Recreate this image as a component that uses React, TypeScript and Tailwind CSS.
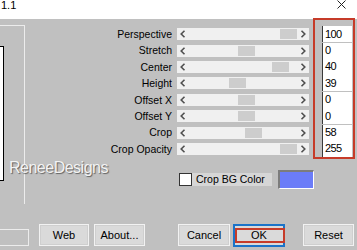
const rows = [
  { label: 'Perspective', value: '100', thumb: 103 },
  { label: 'Stretch', value: '0', thumb: 61 },
  { label: 'Center', value: '40', thumb: 95 },
  { label: 'Height', value: '39', thumb: 52 },
  { label: 'Offset X', value: '0', thumb: 61 },
  { label: 'Offset Y', value: '0', thumb: 61 },
  { label: 'Crop', value: '58', thumb: 68 },
  { label: 'Crop Opacity', value: '255', thumb: 103 },
];

function Chevron({ dir }: { dir: 'left' | 'right' }) {
  return (
    <svg width="6" height="8" viewBox="0 0 6 8" className="relative z-10">
      <path
        d={dir === 'left' ? 'M4.5 0.8 L1.2 4 L4.5 7.2' : 'M1.5 0.8 L4.8 4 L1.5 7.2'}
        fill="none"
        stroke="#505050"
        strokeWidth="1.6"
      />
    </svg>
  );
}

function ScrollBar({ thumb }: { thumb: number }) {
  return (
    <div className="relative ml-[5px] flex h-[12px] w-[132px] items-center justify-between bg-[#f0f0f0] px-[3px]">
      <Chevron dir="left" />
      {/* thumb sits over the track */}
      <div className="absolute top-[1px] h-[10px] w-[17px] bg-[#cdcdcd]" style={{ left: thumb }} />
      <Chevron dir="right" />
    </div>
  );
}

function Button({ label, className = '' }: { label: string; className?: string }) {
  return (
    <div
      className={`flex h-[22px] items-center justify-center border border-[#f2f2f2] bg-[#dadada] text-[11px] text-black shadow-[inset_0_0_0_1px_#cfcfcf] ${className}`}
    >
      {label}
    </div>
  );
}

export default function App() {
  return (
    <div className="relative h-[250px] w-[357px] overflow-hidden bg-[#c0c0c0] font-['Liberation_Sans',Arial,sans-serif] text-black">
      {/* title bar */}
      <div className="flex h-[19px] items-start justify-between bg-white pr-[11px]">
        <span className="ml-[1px] text-[11px] leading-[10px]">1.1</span>
        <svg width="9" height="9" viewBox="0 0 9 9">
          <path d="M0.5 0.5 L8.5 8.5 M8.5 0.5 L0.5 8.5" stroke="#222" strokeWidth="1" />
        </svg>
      </div>

      <div className="flex h-[205px]">
        {/* preview group */}
        <div className="mt-[6px] h-[179px] w-[25px] shrink-0 border-t border-r border-[#ececec]">
          <div className="-ml-[11px] mt-[20px] h-[135px] w-[15px] border border-black bg-white" />
        </div>

        <div className="flex flex-col pt-[7px]">
          {rows.map((r) => (
            <div key={r.label} className="flex h-[16.4px] items-center">
              <div className="w-[147px] text-right text-[10.5px] leading-none">{r.label}</div>
              <ScrollBar thumb={r.thumb} />
              <div className="ml-[13px] flex h-[16px] w-[30px] items-center border-l border-[#3a3a3a] bg-white pl-[2px] text-[11px] leading-none tracking-[-0.6px]">
                {r.value}
              </div>
            </div>
          ))}

          <div className="mt-[13px] flex h-[19px] items-center">
            <div className="ml-[154px] flex h-[13px] w-[93px] items-center bg-[#d6d6d6]">
              <div className="h-[13px] w-[13px] border border-[#333] bg-white" />
              <span className="ml-[4px] text-[10.5px] leading-none">Crop BG Color</span>
            </div>
            <div className="ml-[6px] h-[19px] w-[36px] border-t-2 border-l-2 border-r border-b border-t-[#7c7c7c] border-l-[#7c7c7c] border-r-white border-b-white bg-[#6b7cf8]" />
          </div>
        </div>
      </div>

      {/* buttons */}
      <div className="flex h-[22px] items-start">
        <div className="-ml-[11px] mt-[5px] h-[17px] w-[40px] border border-[#ececec]" />
        <Button label="Web" className="ml-[10px] w-[50px]" />
        <Button label="About..." className="ml-[5px] w-[51px]" />
        <Button label="Cancel" className="ml-[33px] w-[52px]" />
        <div className="relative ml-[3px] flex h-[23px] w-[52px] items-center justify-center border-2 border-[#1a73c9] bg-[#dadada] text-[11px]">
          OK
          <div className="absolute left-[0px] top-[2px] h-[15px] w-[50px] border-2 border-[#c63b29]" />
        </div>
        <Button label="Reset" className="ml-[18px] w-[51px]" />
      </div>

      {/* watermark */}
      <div className="absolute left-[9px] top-[160px] text-[16px] leading-none tracking-[-0.5px] text-[#f3f3f3] [text-shadow:1px_1px_1px_#5e5e5e]">
        ReneeDesigns
      </div>

      {/* red annotation */}
      <div className="absolute left-[313px] top-[18px] h-[141px] w-[42px] border-2 border-[#c63b29]" />
    </div>
  );
}
